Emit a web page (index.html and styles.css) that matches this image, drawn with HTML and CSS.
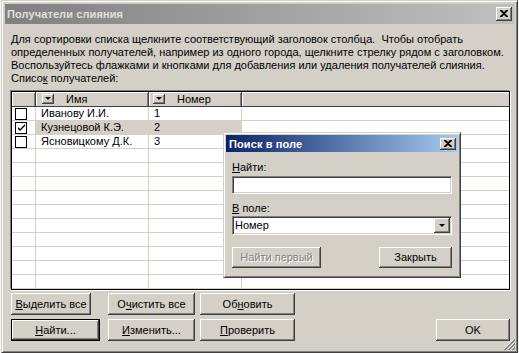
FILE: index.html
```html
<!DOCTYPE html>
<html lang="ru">
<head>
<meta charset="utf-8">
<title>Получатели слияния</title>
<link rel="stylesheet" href="styles.css">
</head>
<body>
<div class="win">
  <div class="titlebar inactive">
    <span class="title">Получатели слияния</span>
    <span class="tbtn"><svg width="8" height="7" viewBox="0 0 8 7"><path d="M0 0h2l2 2 2-2h2v1l-3 2.5 3 2.5v1h-2l-2-2-2 2h-2v-1l3-2.5-3-2.5z" fill="#000"/></svg></span>
  </div>
  <div class="content">
    <p class="intro">Для сортировки списка щелкните соответствующий заголовок столбца.&nbsp; Чтобы отобрать<br>определенных получателей, например из одного города, щелкните стрелку рядом с заголовком.<br>Воспользуйтесь флажками и кнопками для добавления или удаления получателей слияния.</p>
    <div class="label">Списо<u>к</u> получателей:</div>
    <div class="list">
      <div class="lrow head">
        <div class="hc"></div>
        <div class="hc name"><span class="dd"><i></i></span>Имя</div>
        <div class="hc num"><span class="dd"><i></i></span>Номер</div>
        <div class="hc last"></div>
      </div>
      <div class="lrow">
        <div class="c chk"><span class="box"></span></div>
        <div class="c">Иванову И.И.</div>
        <div class="c">1</div>
        <div class="c"></div>
      </div>
      <div class="lrow sel">
        <div class="c chk"><span class="box"><svg width="9" height="9" viewBox="0 0 9 9"><path d="M1 4l2 2 5-5v2l-5 5-2-2z" fill="#000"/></svg></span></div>
        <div class="c">Кузнецовой К.Э.</div>
        <div class="c">2</div>
        <div class="c"></div>
      </div>
      <div class="lrow">
        <div class="c chk"><span class="box"></span></div>
        <div class="c">Ясновицкому Д.К.</div>
        <div class="c">3</div>
        <div class="c"></div>
      </div>
      <div class="lrow"><div class="c"></div><div class="c"></div><div class="c"></div><div class="c"></div></div>
      <div class="lrow"><div class="c"></div><div class="c"></div><div class="c"></div><div class="c"></div></div>
      <div class="lrow"><div class="c"></div><div class="c"></div><div class="c"></div><div class="c"></div></div>
      <div class="lrow"><div class="c"></div><div class="c"></div><div class="c"></div><div class="c"></div></div>
      <div class="lrow"><div class="c"></div><div class="c"></div><div class="c"></div><div class="c"></div></div>
      <div class="lrow"><div class="c"></div><div class="c"></div><div class="c"></div><div class="c"></div></div>
      <div class="lrow"><div class="c"></div><div class="c"></div><div class="c"></div><div class="c"></div></div>
      <div class="lrow"><div class="c"></div><div class="c"></div><div class="c"></div><div class="c"></div></div>
      <div class="lrow"><div class="c"></div><div class="c"></div><div class="c"></div><div class="c"></div></div>
      <div class="lrow"><div class="c"></div><div class="c"></div><div class="c"></div><div class="c"></div></div>
    </div>
    <div class="buttons">
      <button class="btn w80"><u>В</u>ыделить все</button>
      <button class="btn w87">О<u>ч</u>истить все</button>
      <button class="btn w95">Об<u>н</u>овить</button>
      <span></span>
      <span></span>
      <button class="btn def w89"><u>Н</u>айти...</button>
      <button class="btn w87"><u>И</u>зменить...</button>
      <button class="btn w95"><u>П</u>роверить</button>
      <span></span>
      <button class="btn w74">OK</button>
    </div>
  </div>
  <svg class="grip" width="12" height="12" viewBox="0 0 12 12">
    <path d="M11 1L1 11M11 5L5 11M11 9L9 11" stroke="#fff" stroke-width="1"/>
    <path d="M12 1L1 12M12 2L2 12M12 5L5 12M12 6L6 12M12 9L9 12M12 10L10 12" stroke="#808080" stroke-width="1"/>
  </svg>

  <div class="dlg">
    <div class="titlebar active">
      <span class="title">Поиск в поле</span>
      <span class="tbtn"><svg width="8" height="7" viewBox="0 0 8 7"><path d="M0 0h2l2 2 2-2h2v1l-3 2.5 3 2.5v1h-2l-2-2-2 2h-2v-1l3-2.5-3-2.5z" fill="#000"/></svg></span>
    </div>
    <div class="dbody">
      <div class="dlabel"><u>Н</u>айти:</div>
      <div class="field"></div>
      <div class="dlabel second"><u>В</u> поле:</div>
      <div class="field combo"><span class="val">Номер</span><span class="cbtn"><i></i></span></div>
      <div class="drow">
        <button class="btn dis w89">Найти первый</button>
        <button class="btn w73">Закрыть</button>
      </div>
    </div>
  </div>
</div>
</body>
</html>
```

FILE: styles.css
```css
* { box-sizing: border-box; }
html, body { margin: 0; padding: 0; }
body {
  width: 519px;
  height: 353px;
  background: #f4f4f4;
  font-family: "Liberation Sans", Arial, sans-serif;
  font-size: 11px;
  color: #000;
  overflow: hidden;
}
u { text-decoration: underline; text-underline-offset: 1px; }

.win {
  position: relative;
  margin-left: 1px;
  width: 517px;
  height: 353px;
  background: #d4d0c8;
  border: 1px solid;
  border-color: #d4d0c8 #404040 #404040 #d4d0c8;
  box-shadow: inset 1px 1px #fff, inset -1px -1px #808080;
  padding: 3px;
  display: flex;
  flex-direction: column;
}

.titlebar {
  height: 20px;
  display: flex;
  align-items: center;
  justify-content: space-between;
  padding: 0 2px 0 2px;
  flex: none;
}
.titlebar.inactive { background: linear-gradient(to right, #808080, #c0c0c0); }
.titlebar.active { background: linear-gradient(to right, #0a246a, #a6caf0); height: 17px; }
.title {
  font-weight: bold;
  font-size: 11px;
  letter-spacing: 0.1px;
  color: #e2e0da;
  white-space: nowrap;
}
.active .title { color: #fff; }
.tbtn {
  width: 16px;
  height: 14px;
  background: #d4d0c8;
  box-shadow: inset -1px -1px #404040, inset 1px 1px #fff, inset -2px -2px #808080;
  display: flex;
  align-items: center;
  justify-content: center;
  padding: 0 1px 1px 0;
}
.active .tbtn { height: 12px; width: 16px; }

.content {
  flex: 1;
  padding: 9px 4px 0 6px;
  display: flex;
  flex-direction: column;
}
.intro {
  margin: 0;
  padding-left: 0;
  line-height: 13px;
  white-space: nowrap;
}
.label { line-height: 13px; white-space: nowrap; }

.list {
  margin-top: 6px;
  height: 199px;
  background: #fff;
  border: 1px solid #000;
  box-shadow: -1px -1px 0 #808080, 1px 1px 0 #fff;
  overflow: hidden;
}
.lrow {
  display: grid;
  grid-template-columns: 24px 113px 93px 1fr;
  height: 14px;
}
.lrow.head { height: 15px; border-bottom: 1px solid #404040; }
.hc {
  background: #d4d0c8;
  box-shadow: inset 1px 1px #fff, inset -1px 0 #808080;
  border-right: 1px solid #404040;
  display: flex;
  align-items: center;
  line-height: 13px;
  white-space: nowrap;
}
.hc.name { padding-left: 6px; }
.hc.num { padding-left: 4px; }
.hc.last { border-right: 0; box-shadow: inset 1px 1px #fff; }
.dd {
  width: 12px;
  height: 10px;
  margin-right: 12px;
  background: #d4d0c8;
  box-shadow: inset -1px -1px #404040, inset 1px 1px #fff, inset -2px -2px #808080;
  display: flex;
  align-items: center;
  justify-content: center;
  padding: 0 1px 1px 0;
}
.dd i, .cbtn i {
  display: block;
  width: 0;
  height: 0;
  border-left: 3px solid transparent;
  border-right: 3px solid transparent;
  border-top: 3px solid #000;
}
.c {
  border-right: 1px solid #d4d0c8;
  border-bottom: 1px solid #d4d0c8;
  padding-left: 5px;
  line-height: 13px;
  white-space: nowrap;
  overflow: hidden;
}
.c:last-child { border-right: 0; }
.c.chk { padding-left: 3px; display: flex; align-items: center; }
.sel .c:nth-child(2), .sel .c:nth-child(3) { background: #d4d0c8; }
.box {
  width: 12px;
  height: 12px;
  border: 1px solid #000;
  background: #fff;
  display: flex;
  align-items: center;
  justify-content: center;
}

.buttons {
  margin-top: 3px;
  display: grid;
  grid-template-columns: 97px 92px 95px 1fr 74px;
  grid-template-rows: 22px 22px;
  row-gap: 4px;
}
.btn {
  font-family: inherit;
  font-size: 11px;
  color: #000;
  height: 22px;
  padding: 0;
  border: 0;
  background: #d4d0c8;
  box-shadow: inset -1px -1px #404040, inset 1px 1px #fff, inset -2px -2px #808080;
  white-space: nowrap;
  line-height: 13px;
}
.btn.def {
  border: 1px solid #000;
}
.btn.dis { color: #808080; text-shadow: 1px 1px #fff; }
.w80 { width: 80px; }
.w87 { width: 87px; }
.w89 { width: 89px; }
.w95 { width: 95px; }
.w74 { width: 74px; }
.w73 { width: 73px; }

.grip { position: absolute; right: 2px; bottom: 2px; }

.dlg {
  position: absolute;
  left: 221px;
  top: 131px;
  width: 238px;
  height: 146px;
  background: #d4d0c8;
  border: 1px solid;
  border-color: #d4d0c8 #404040 #404040 #d4d0c8;
  box-shadow: inset 1px 1px #fff, inset -1px -1px #808080;
  padding: 2px;
}
.dlg .titlebar { padding: 0 2px 0 3px; }
.dbody { padding: 9px 6px 0 6px; }
.dlabel { line-height: 13px; }
.dlabel.second { margin-top: 8px; }
.field {
  margin-top: 2px;
  height: 18px;
  background: #fff;
  border: 1px solid;
  border-color: #808080 #fff #fff #808080;
  box-shadow: inset 1px 1px #404040, inset -1px -1px #d4d0c8;
}
.field.combo {
  margin-top: 1px;
  height: 19px;
  display: flex;
  align-items: center;
  justify-content: space-between;
  padding: 1px 1px 1px 2px;
}
.combo .val { line-height: 13px; }
.cbtn {
  width: 16px;
  height: 15px;
  background: #d4d0c8;
  box-shadow: inset -1px -1px #404040, inset 1px 1px #fff, inset -2px -2px #808080;
  display: flex;
  align-items: center;
  justify-content: center;
  padding: 0 1px 1px 0;
}
.drow {
  margin-top: 12px;
  display: flex;
  justify-content: space-between;
}
.drow .btn { height: 21px; }
```
